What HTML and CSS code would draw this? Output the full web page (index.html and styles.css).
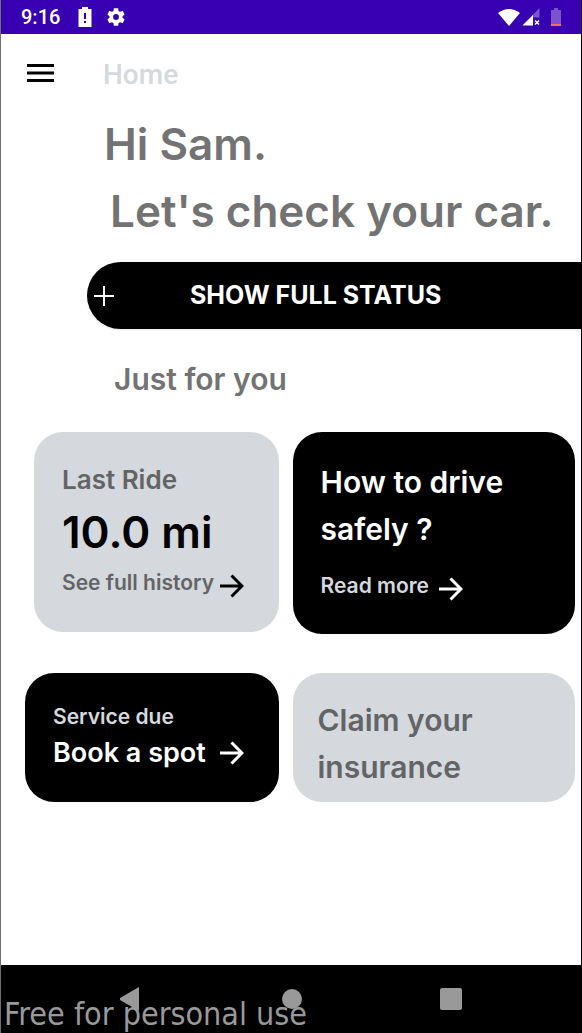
FILE: index.html
```html
<!DOCTYPE html>
<html lang="en">
<head>
<meta charset="utf-8">
<meta name="viewport" content="width=device-width, initial-scale=1">
<title>Home</title>
<link rel="stylesheet" href="styles.css">
</head>
<body>
<div class="screen">
  <div class="status-bar">
    <span class="clock">9:16</span>
    <svg class="status-alert" width="14" height="20" viewBox="0 0 14 20"><path fill="#fff" fill-rule="evenodd" d="M4 0h6v2h3.500v18H.5V2H4zM6 6v6h2V6zm0 8v2h2v-2z"/></svg>
    <svg class="status-gear" width="22" height="22" viewBox="0 0 24 24"><path fill="#fff" d="M19.140 12.940c.040-.3.060-.610.060-.940 0-.320-.020-.640-.070-.940l2.030-1.580c.180-.140.230-.410.120-.610l-1.920-3.320c-.120-.220-.370-.290-.590-.220l-2.390.960c-.5-.380-1.030-.7-1.620-.940l-.360-2.540c-.040-.240-.240-.410-.480-.410h-3.840c-.240 0-.430.170-.470.410l-.360 2.540c-.590.240-1.130.570-1.620.940l-2.390-.960c-.220-.080-.470 0-.590.220L2.740 8.870c-.120.210-.080.470.120.610l2.030 1.580c-.050.3-.090.630-.090.940s.020.640.070.940l-2.030 1.580c-.180.140-.230.410-.120.610l1.920 3.320c.120.220.370.290.590.220l2.390-.960c.5.380 1.030.7 1.620.940l.360 2.540c.050.240.240.410.480.410h3.840c.240 0 .440-.170.470-.410l.360-2.540c.590-.240 1.130-.560 1.620-.940l2.390.960c.220.080.470 0 .590-.220l1.920-3.320c.120-.220.070-.470-.120-.610zM12 15.200A3.200 3.200 0 1 1 12 8.800a3.200 3.200 0 0 1 0 6.400z"/></svg>
    <div class="status-right">
      <svg width="22" height="17" viewBox="0 0 22 17"><path fill="#fff" d="M0 4Q11-4 22 4L11 17z"/></svg>
      <svg width="18" height="18" viewBox="0 0 18 18"><path fill="#7c52cf" d="M17.500 0v9.500H11V17H1z"/><path fill="#fff" d="M11 7v10.500H.5z"/><path stroke="#fff" stroke-width="1.500" d="M13 12.500l4 4m0-4l-4 4"/></svg>
      <svg class="status-battery" width="10" height="18" viewBox="0 0 10 18"><path fill="#7c52cf" d="M3 0h4v2h3v14H0V2h3z"/><path fill="#f0705c" d="M0 16h10v2H0z"/></svg>
    </div>
  </div>

  <header class="app-bar">
    <button class="icon-button" type="button" aria-label="Open menu">
      <svg width="27" height="18" viewBox="0 0 27 18"><path fill="#000" d="M0 0h27v3H0zM0 7.500h27v3H0zM0 15h27v3H0z"/></svg>
    </button>
    <h1 class="title">Home</h1>
  </header>

  <main class="content">
    <div class="greeting">
      <p class="hello">Hi Sam.</p>
      <p class="prompt">Let's check your car.</p>
    </div>
    <button class="status-button" type="button">
      <svg width="20" height="20" viewBox="0 0 20 20"><path stroke="#fff" stroke-width="2" d="M10 0v20M0 10h20"/></svg>
      <span class="status-label">SHOW FULL STATUS</span>
    </button>
    <h2 class="section-title">Just for you</h2>

    <div class="cards">
      <a class="card light ride" href="#history">
        <span class="medium">Last Ride</span>
        <span class="distance">10.0 mi</span>
        <span class="row"><span class="small">See full history</span>
          <svg class="arrow" width="24" height="24" viewBox="0 0 24 24"><path d="M0 12h22M11.500 1.500L22 12 11.500 22.500"/></svg></span>
      </a>
      <a class="card dark safety" href="#safety">
        <span class="large">How to drive<br>safely ?</span>
        <span class="row"><span class="small">Read more</span>
          <svg class="arrow" width="24" height="24" viewBox="0 0 24 24"><path d="M0 12h22M11.500 1.500L22 12 11.500 22.500"/></svg></span>
      </a>
      <a class="card dark service" href="#service">
        <span class="small">Service due</span>
        <span class="row spaced"><span class="medium">Book a spot</span>
          <svg class="arrow" width="24" height="24" viewBox="0 0 24 24"><path d="M0 12h22M11.500 1.500L22 12 11.500 22.500"/></svg></span>
      </a>
      <a class="card light claim" href="#claim">
        <span class="large">Claim your<br>insurance</span>
      </a>
    </div>
  </main>

  <nav class="nav-bar" aria-label="System">
    <button type="button" aria-label="Back"><svg width="20" height="24" viewBox="0 0 20 24"><path fill="#999" d="M19 0v24L0 13q-1-1 0-2z"/></svg></button>
    <button type="button" aria-label="Home"><svg width="20" height="20" viewBox="0 0 20 20"><circle fill="#999" cx="10" cy="10" r="10"/></svg></button>
    <button type="button" aria-label="Recent apps"><svg width="22" height="22" viewBox="0 0 22 22"><rect fill="#999" width="22" height="22" rx="2"/></svg></button>
    <span class="watermark">Free for personal use</span>
  </nav>
</div>
</body>
</html>
```
FILE: styles.css
```css
* { box-sizing: border-box; }

body {
  margin: 0;
  background: #fff;
  font-family: Inter, "Open Sans", sans-serif;
  font-weight: 600;
  color: #737373;
}

button {
  padding: 0;
  border: 0;
  background: none;
  font: inherit;
  cursor: pointer;
}

svg { display: block; flex: none; }
p, h1, h2 { margin: 0; font-weight: inherit; }

.screen {
  display: flex;
  flex-direction: column;
  min-height: 100vh;
  border-left: 1px solid #707070;
  border-right: 1px solid #000;
}

.status-bar {
  display: flex;
  align-items: center;
  height: 34px;
  padding: 0 20px;
  background: #3700b3;
  color: #fff;
}

.clock {
  font: 500 20px/34px Roboto, sans-serif;
}

.status-alert { margin-left: 18px; }
.status-gear { margin-left: 13px; }

.status-right {
  display: flex;
  align-items: center;
  gap: 2px;
  margin-left: auto;
}

.status-battery { margin-left: 9px; }

.app-bar {
  display: flex;
  align-items: center;
  height: 77px;
  padding: 0 26px;
}

.title {
  margin-left: 49px;
  padding-top: 4px;
  font: 500 28px/36px Roboto, sans-serif;
  color: #d5d8dd;
}

.greeting {
  padding-left: 103px;
  font-size: 44px;
  line-height: 67px;
}

.prompt {
  padding-left: 6px;
  white-space: nowrap;
}

.status-button {
  display: flex;
  align-items: center;
  width: calc(100% - 86px);
  height: 67px;
  margin: 17px 0 0 86px;
  padding-left: 7px;
  border-radius: 34px 0 0 34px;
  background: #000;
  color: #fff;
  font-size: 25px;
  font-weight: 700;
  box-shadow: 0 1px 2px rgba(0, 0, 0, 0.1);
}

.status-label {
  margin-left: 76px;
  padding-bottom: 2px;
}

.section-title {
  margin: 27px 0 29px 113px;
  font-size: 30px;
  line-height: 47px;
}

.cards {
  display: grid;
  grid-template-columns: 254fr 283fr;
  gap: 39px 14px;
  align-items: start;
  padding: 0 6px 24px 24px;
}

.card {
  display: flex;
  flex-direction: column;
  border-radius: 29px;
  text-decoration: none;
  white-space: nowrap;
}

.light { background: #d5d8dd; color: #636466; }
.dark { background: #000; color: #fff; }
.dark .small { color: #d5d8dd; }

.ride { margin-left: 9px; padding: 28px 28px 30px; }
.safety { padding: 27px 28px 29px; }
.service { padding: 26px 28px 31px; }
.claim { padding: 24px 25px 11px; }

.small { font-size: 21px; line-height: 36px; }
.medium { font-size: 27px; line-height: 36px; }
.large { font-size: 30px; line-height: 47px; }
.ride > .medium { font-size: 26px; line-height: 40px; }

.distance {
  font-size: 44px;
  line-height: 64px;
  color: #000;
}

.row {
  display: flex;
  align-items: center;
  gap: 6px;
}

.spaced { gap: 14px; }
.safety .row { gap: 10px; margin-top: 14px; }

.arrow {
  fill: none;
  stroke: #fff;
  stroke-width: 3px;
}

.light .arrow { stroke: #000; }

.ride .arrow,
.safety .arrow { margin-top: 5px; }

.ride .row,
.safety .row { height: 38px; }

.nav-bar {
  position: relative;
  display: grid;
  grid-template-columns: 257fr 67fr 252fr;
  align-items: center;
  justify-items: center;
  height: 68px;
  padding-right: 4px;
  margin-top: auto;
  background: #000;
}

.watermark {
  position: absolute;
  left: 3px;
  bottom: 0;
  font: 400 32px/38px "DejaVu Sans Condensed", "DejaVu Sans", sans-serif;
  color: #999;
  white-space: nowrap;
}
```
